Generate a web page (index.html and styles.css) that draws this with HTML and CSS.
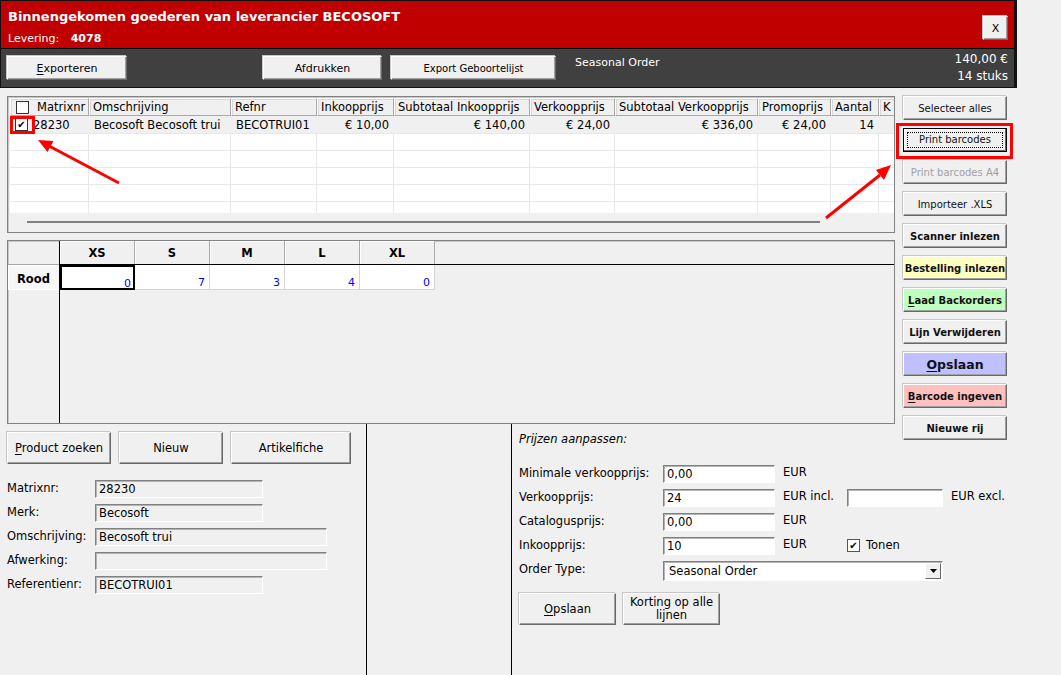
FILE: index.html
```html
<!DOCTYPE html>
<html lang="nl">
<head>
    <meta charset="utf-8">
    <title>Binnengekomen goederen</title>
    <link rel="stylesheet" href="styles.css">
</head>
<body>
    <div class="form">
        <div class="top">
            <div class="titlebar">
                <div class="title-text">
                    <div class="title">Binnengekomen goederen van leverancier BECOSOFT</div>
                    <div class="delivery">Levering: <b>4078</b></div>
                </div>
                <button class="btn close-btn">X</button>
            </div>
            <div class="toolbar">
                <button class="btn tb-export"><u>E</u>xporteren</button>
                <button class="btn tb-print">Afdrukken</button>
                <button class="btn tb-geboorte">Export Geboortelijst</button>
                <span class="order-type">Seasonal Order</span>
                <div class="totals">
                    <div>140,00 €</div>
                    <div>14 stuks</div>
                </div>
            </div>
        </div>

        <div class="work">
            <div class="left-col">
                <!-- order lines -->
                <div class="panel lines">
                    <div class="grid-row grid-head">
                        <div class="cell c1"><span class="chk"></span>Matrixnr</div>
                        <div class="cell c2">Omschrijving</div>
                        <div class="cell c3">Refnr</div>
                        <div class="cell c4">Inkoopprijs</div>
                        <div class="cell c5">Subtotaal Inkoopprijs</div>
                        <div class="cell c6">Verkoopprijs</div>
                        <div class="cell c7">Subtotaal Verkoopprijs</div>
                        <div class="cell c8">Promoprijs</div>
                        <div class="cell c9">Aantal</div>
                        <div class="cell c10">K</div>
                    </div>
                    <div class="grid-row grid-data">
                        <div class="cell c1"><span class="chk checked">&#10004;</span>28230</div>
                        <div class="cell c2">Becosoft Becosoft trui</div>
                        <div class="cell c3">BECOTRUI01</div>
                        <div class="cell c4 num">€ 10,00</div>
                        <div class="cell c5 num">€ 140,00</div>
                        <div class="cell c6 num">€ 24,00</div>
                        <div class="cell c7 num">€ 336,00</div>
                        <div class="cell c8 num">€ 24,00</div>
                        <div class="cell c9 num">14</div>
                        <div class="cell c10"></div>
                    </div>
                    <div class="grid-empty">
                        <div class="grid-row"><div class="cell c1"></div><div class="cell c2"></div><div class="cell c3"></div><div class="cell c4"></div><div class="cell c5"></div><div class="cell c6"></div><div class="cell c7"></div><div class="cell c8"></div><div class="cell c9"></div><div class="cell c10"></div></div>
                        <div class="grid-row"><div class="cell c1"></div><div class="cell c2"></div><div class="cell c3"></div><div class="cell c4"></div><div class="cell c5"></div><div class="cell c6"></div><div class="cell c7"></div><div class="cell c8"></div><div class="cell c9"></div><div class="cell c10"></div></div>
                        <div class="grid-row"><div class="cell c1"></div><div class="cell c2"></div><div class="cell c3"></div><div class="cell c4"></div><div class="cell c5"></div><div class="cell c6"></div><div class="cell c7"></div><div class="cell c8"></div><div class="cell c9"></div><div class="cell c10"></div></div>
                        <div class="grid-row"><div class="cell c1"></div><div class="cell c2"></div><div class="cell c3"></div><div class="cell c4"></div><div class="cell c5"></div><div class="cell c6"></div><div class="cell c7"></div><div class="cell c8"></div><div class="cell c9"></div><div class="cell c10"></div></div>
                        <div class="grid-row"><div class="cell c1"></div><div class="cell c2"></div><div class="cell c3"></div><div class="cell c4"></div><div class="cell c5"></div><div class="cell c6"></div><div class="cell c7"></div><div class="cell c8"></div><div class="cell c9"></div><div class="cell c10"></div></div>
                    </div>
                    <div class="hscroll"><div class="hscroll-bar"></div></div>
                </div>

                <!-- size matrix -->
                <div class="panel sizes">
                    <div class="row-heads">
                        <div class="rh-corner"></div>
                        <div class="rh-cell">Rood</div>
                    </div>
                    <div class="size-body">
                        <div class="size-head">
                            <div class="sh-cell">XS</div>
                            <div class="sh-cell">S</div>
                            <div class="sh-cell">M</div>
                            <div class="sh-cell">L</div>
                            <div class="sh-cell">XL</div>
                        </div>
                        <div class="size-values">
                            <div class="sv-cell current">0</div>
                            <div class="sv-cell">7</div>
                            <div class="sv-cell">3</div>
                            <div class="sv-cell">4</div>
                            <div class="sv-cell">0</div>
                        </div>
                    </div>
                </div>

                <div class="bottom">
                    <div class="product">
                        <div class="btn-row">
                            <button class="btn big w104"><u>P</u>roduct zoeken</button>
                            <button class="btn big w104">Nieuw</button>
                            <button class="btn big w120">Artikelfiche</button>
                        </div>
                        <div class="fields">
                            <div class="field"><label>Matrixnr:</label><div class="box ro short">28230</div></div>
                            <div class="field"><label>Merk:</label><div class="box ro short">Becosoft</div></div>
                            <div class="field"><label>Omschrijving:</label><div class="box ro long">Becosoft trui</div></div>
                            <div class="field"><label>Afwerking:</label><div class="box ro long"></div></div>
                            <div class="field"><label>Referentienr:</label><div class="box ro short">BECOTRUI01</div></div>
                        </div>
                    </div>
                    <div class="spacer-col"></div>
                    <div class="prices">
                        <div class="prices-title">Prijzen aanpassen:</div>
                        <div class="price-rows">
                            <div class="prow"><label>Minimale verkoopprijs:</label><div class="box price">0,00</div><span class="unit">EUR</span></div>
                            <div class="prow"><label>Verkoopprijs:</label><div class="box price">24</div><span class="unit unit-wide">EUR incl.</span><div class="box excl"></div><span class="unit">EUR excl.</span></div>
                            <div class="prow"><label>Catalogusprijs:</label><div class="box price">0,00</div><span class="unit">EUR</span></div>
                            <div class="prow"><label>Inkoopprijs:</label><div class="box price">10</div><span class="unit unit-wide">EUR</span><span class="chk checked small">&#10004;</span><span class="tonen">Tonen</span></div>
                            <div class="prow"><label>Order Type:</label>
                                <div class="box select">Seasonal Order<span class="drop"><svg width="7" height="4" viewBox="0 0 7 4"><path d="M0 0h7L3.5 4z" fill="#000"/></svg></span></div>
                            </div>
                        </div>
                        <div class="btn-row price-btns">
                            <button class="btn big w97"><u>O</u>pslaan</button>
                            <button class="btn big w97 two-line">Korting op alle lijnen</button>
                        </div>
                    </div>
                </div>
            </div>

            <div class="side-buttons">
                <button class="btn side">Selecteer alles</button>
                <button class="btn side focused"><span class="focus-ring">Print barcodes</span></button>
                <button class="btn side disabled">Print barcodes A4</button>
                <button class="btn side">Importeer .XLS</button>
                <button class="btn side bold">Scanner inlezen</button>
                <button class="btn side bold yellow">Bestelling inlezen</button>
                <button class="btn side bold green"><u>L</u>aad Backorders</button>
                <button class="btn side bold">Lijn Verwijderen</button>
                <button class="btn side bold blue save"><u>O</u>pslaan</button>
                <button class="btn side bold pink"><u>B</u>arcode ingeven</button>
                <button class="btn side bold">Nieuwe rij</button>
            </div>
        </div>
    </div>

    <!-- red annotations drawn over the screenshot -->
    <svg class="annotations" width="1061" height="675" viewBox="0 0 1061 675">
        <rect x="11.5" y="117.5" width="22" height="15" fill="none" stroke="#f00" stroke-width="3"/>
        <rect x="897.5" y="124.5" width="114" height="33" fill="none" stroke="#f00" stroke-width="3"/>
        <line x1="119" y1="183" x2="50" y2="146.5" stroke="#f00" stroke-width="3"/>
        <polygon points="38,140 53.5,141 47.5,152" fill="#f00"/>
        <line x1="826" y1="218" x2="880" y2="175" stroke="#f00" stroke-width="3"/>
        <polygon points="891,165 884,180 876,170" fill="#f00"/>
    </svg>
</body>
</html>
```

FILE: styles.css
```css
body {
    margin: 0;
    background-color: #f0f0f0;
    font-family: "DejaVu Sans", Verdana, sans-serif;
    font-size: 11.5px;
    color: #000;
    overflow: hidden;
    position: relative;
    height: 675px;
}

.form {
    width: 1017px;
}

/* generic windows-style button */
.btn {
    font: inherit;
    color: #000;
    background-color: #f0f0f0;
    border: 1px solid;
    border-color: #fff #696969 #696969 #fff;
    box-shadow: inset -1px -1px 0 #a0a0a0, -1px -1px 0 #c8c8c8;
    padding: 0;
    margin: 0;
    height: 24px;
    box-sizing: border-box;
    cursor: default;
}
.btn u {
    text-decoration-thickness: 1px;
    text-underline-offset: 2px;
}

/* header */
.top {
    border: 1px solid #111;
    border-right-width: 3px;
}
.titlebar {
    height: 47px;
    background-color: #c00000;
    color: #fff;
    display: flex;
    align-items: flex-start;
}
.title-text {
    flex: 1;
    padding: 7px 0 0 7px;
}
.title {
    font-size: 13px;
    font-weight: bold;
    line-height: 18px;
}
.delivery {
    font-size: 11px;
    line-height: 18px;
    margin-top: 4px;
}
.delivery b {
    margin-left: 8px;
}
.close-btn {
    width: 25px;
    height: 24px;
    margin: 15px 6px 0 0;
    font-size: 11px;
}

.toolbar {
    height: 39px;
    border-top: 1px solid #000;
    background-color: #404040;
    display: flex;
    align-items: flex-start;
    box-sizing: border-box;
    padding-top: 7px;
}
.toolbar .btn {
    font-size: 11px;
}
.tb-export {
    width: 120px;
    margin-left: 6px;
}
.tb-print {
    width: 119px;
    margin-left: 136px;
}
.tb-geboorte {
    width: 165px;
    margin-left: 9px;
    font-size: 10px !important;
}
.order-type {
    color: #fff;
    font-size: 11px;
    margin: -2px 0 0 19px;
    line-height: 17px;
}
.totals {
    margin-left: auto;
    margin-top: -5px;
    padding-right: 6px;
    color: #fff;
    font-size: 12px;
    line-height: 17px;
    text-align: right;
}

/* main work area */
.work {
    display: flex;
    align-items: flex-start;
}
.left-col {
    width: 895px;
    flex-shrink: 0;
}

.panel {
    margin: 7px 0 0 7px;
    border: 1px solid #828282;
    box-shadow: inset 1px 1px 0 #c8c8c8;
    box-sizing: border-box;
    overflow: hidden;
}

/* order lines grid */
.lines {
    margin-top: 8px;
    width: 888px;
    height: 137px;
    padding: 1px 0 0 2px;
}
.grid-row {
    display: flex;
    width: 1000px;
}
.cell {
    box-sizing: border-box;
    flex-shrink: 0;
    padding: 0 5px;
    white-space: nowrap;
    overflow: hidden;
    display: flex;
    align-items: center;
}
.c1 { width: 79px; }
.c2 { width: 142px; }
.c3 { width: 86px; }
.c4 { width: 77px; }
.c5 { width: 136px; }
.c6 { width: 85px; }
.c7 { width: 143px; }
.c8 { width: 73px; }
.c9 { width: 48px; }
.c10 { width: 40px; }
.num {
    justify-content: flex-end;
}

.grid-head {
    height: 18px;
}
.grid-head .cell {
    padding: 0 3px;
    border: 1px solid #a9a9a9;
    border-left-color: #fff;
    border-top-color: #fff;
    box-shadow: inset 1px 1px 0 #d8d8d8;
    background-color: #f0f0f0;
}
.grid-head .c1 {
    padding-left: 5px;
}

.chk {
    width: 11px;
    height: 11px;
    border: 1px solid #333;
    background-color: #fff;
    box-sizing: content-box;
    margin-right: 9px;
    flex-shrink: 0;
    font-size: 10px;
    line-height: 11px;
    text-align: center;
    display: inline-block;
}
.grid-head .chk {
    margin-right: 8px;
}
.grid-data .c1 {
    padding-left: 5px;
}
.grid-data .chk {
    margin-right: 5px;
}

.grid-data {
    height: 17px;
    background-color: #f0f0f0;
}
.grid-empty {
    height: 80px;
    overflow: hidden;
    background-color: #fff;
}
.grid-empty .grid-row {
    height: 17px;
}
.grid-empty .cell {
    border-top: 1px solid #e8e8e8;
    border-right: 1px solid #e8e8e8;
}
.hscroll {
    height: 19px;
    background-color: #f0f0f0;
    padding: 8px 0 0 17px;
    box-sizing: border-box;
}
.hscroll-bar {
    width: 793px;
    height: 2px;
    background-color: #808080;
}

/* size matrix */
.sizes {
    width: 888px;
    height: 184px;
    display: flex;
}
.row-heads {
    width: 52px;
    border-right: 1px solid #000;
    flex-shrink: 0;
    box-sizing: border-box;
}
.rh-corner {
    height: 24px;
    border-bottom: 1px solid #a9a9a9;
    box-sizing: border-box;
}
.rh-cell {
    height: 25px;
    background-color: #f6f6f6;
    border-top: 1px solid #fff;
    border-left: 1px solid #fff;
    border-bottom: 1px solid #fff;
    font-weight: bold;
    font-size: 11.5px;
    padding-left: 8px;
    line-height: 26px;
    box-sizing: border-box;
}
.size-body {
    flex: 1;
}
.size-head {
    display: flex;
    height: 24px;
    border-bottom: 1px solid #000;
    box-sizing: border-box;
}
.sh-cell {
    width: 75px;
    box-sizing: border-box;
    border-right: 1px solid #a9a9a9;
    box-shadow: inset 1px 1px 0 #fff;
    text-align: center;
    font-weight: bold;
    font-size: 11.5px;
    line-height: 25px;
}
.size-values {
    display: flex;
    height: 25px;
}
.sv-cell {
    width: 75px;
    box-sizing: border-box;
    background-color: #fff;
    border-right: 1px solid #d4d4d4;
    border-bottom: 1px solid #d4d4d4;
    color: #0000ff;
    text-align: right;
    padding: 11px 4px 0 0;
    font-size: 11px;
    line-height: 14px;
}
.sv-cell.current {
    border: 2px solid #000;
    padding-top: 10px;
    padding-right: 2px;
}

/* lower part */
.bottom {
    width: 1017px;
    height: 251px;
    display: flex;
}
.product {
    width: 367px;
    border-right: 1px solid #000;
    box-sizing: border-box;
    flex-shrink: 0;
}
.spacer-col {
    width: 145px;
    border-right: 1px solid #000;
    box-sizing: border-box;
    flex-shrink: 0;
}
.prices {
    flex: 1;
    padding-left: 7px;
}

.btn-row {
    display: flex;
    gap: 8px;
    margin: 8px 0 0 7px;
}
.btn.big {
    height: 32px;
    font-size: 11.5px;
}
.w104 { width: 104px; }
.w120 { width: 120px; }
.w97 { width: 97px; }
.two-line {
    line-height: 13px;
    padding: 0 4px;
    white-space: normal;
}

.fields {
    margin: 16px 0 0 7px;
    display: flex;
    flex-direction: column;
    gap: 6px;
}
.field {
    display: flex;
    align-items: flex-start;
}
.field label {
    width: 88px;
    line-height: 16px;
}
.box {
    height: 18px;
    box-sizing: border-box;
    border: 1px solid;
    border-color: #808080 #fff #fff #808080;
    box-shadow: inset 1px 1px 0 #b4b4b4;
    background-color: #fff;
    padding: 1px 3px 0;
    line-height: 15px;
    white-space: nowrap;
}
.box.ro {
    background-color: #f0f0f0;
}
.short { width: 168px; }
.long { width: 232px; }

.prices-title {
    font-style: italic;
    line-height: 16px;
    margin-top: 7px;
}
.price-rows {
    margin-top: 18px;
    display: flex;
    flex-direction: column;
    gap: 6px;
}
.prow {
    display: flex;
    align-items: flex-start;
}
.prow label {
    width: 144px;
    line-height: 16px;
}
.price {
    width: 112px;
}
.unit {
    margin-left: 8px;
    line-height: 15px;
}
.unit-wide {
    width: 64px;
    flex-shrink: 0;
}
.excl {
    width: 96px;
}
.chk.small {
    width: 11px;
    height: 11px;
    margin: 2px 6px 0 0;
    border-color: #555;
}
.tonen {
    line-height: 17px;
}
.select {
    width: 280px;
    height: 20px;
    display: flex;
    align-items: center;
    padding-right: 1px;
    padding-top: 0;
    padding-left: 5px;
}
.drop {
    margin-left: auto;
    width: 16px;
    height: 16px;
    box-sizing: border-box;
    background-color: #f0f0f0;
    border: 1px solid;
    border-color: #fff #696969 #696969 #fff;
    display: flex;
    align-items: center;
    justify-content: center;
}
.price-btns {
    margin: 12px 0 0 0;
    gap: 7px;
}

/* right button column */
.side-buttons {
    width: 104px;
    margin: 8px 0 0 8px;
    display: flex;
    flex-direction: column;
    gap: 8px;
}
.btn.side {
    width: 104px;
    height: 24px;
    font-size: 10px;
    color: #111;
}
.btn.bold {
    font-weight: bold;
}
.btn.disabled {
    color: #a0a0a0;
}
.btn.focused {
    border: 1px solid #000;
    box-shadow: inset -1px -1px 0 #696969, inset 1px 1px 0 #fff;
    padding: 3px;
}
.focus-ring {
    display: block;
    height: 100%;
    box-sizing: border-box;
    border: 1px dotted #000;
    line-height: 14px;
}
.yellow { background-color: #ffffc0; }
.green { background-color: #c0ffc0; }
.blue { background-color: #c0c0ff; }
.pink { background-color: #ffc0c0; }
.btn.save {
    font-size: 12.5px;
}

.annotations {
    position: absolute;
    top: 0;
    left: 0;
    pointer-events: none;
}
```
